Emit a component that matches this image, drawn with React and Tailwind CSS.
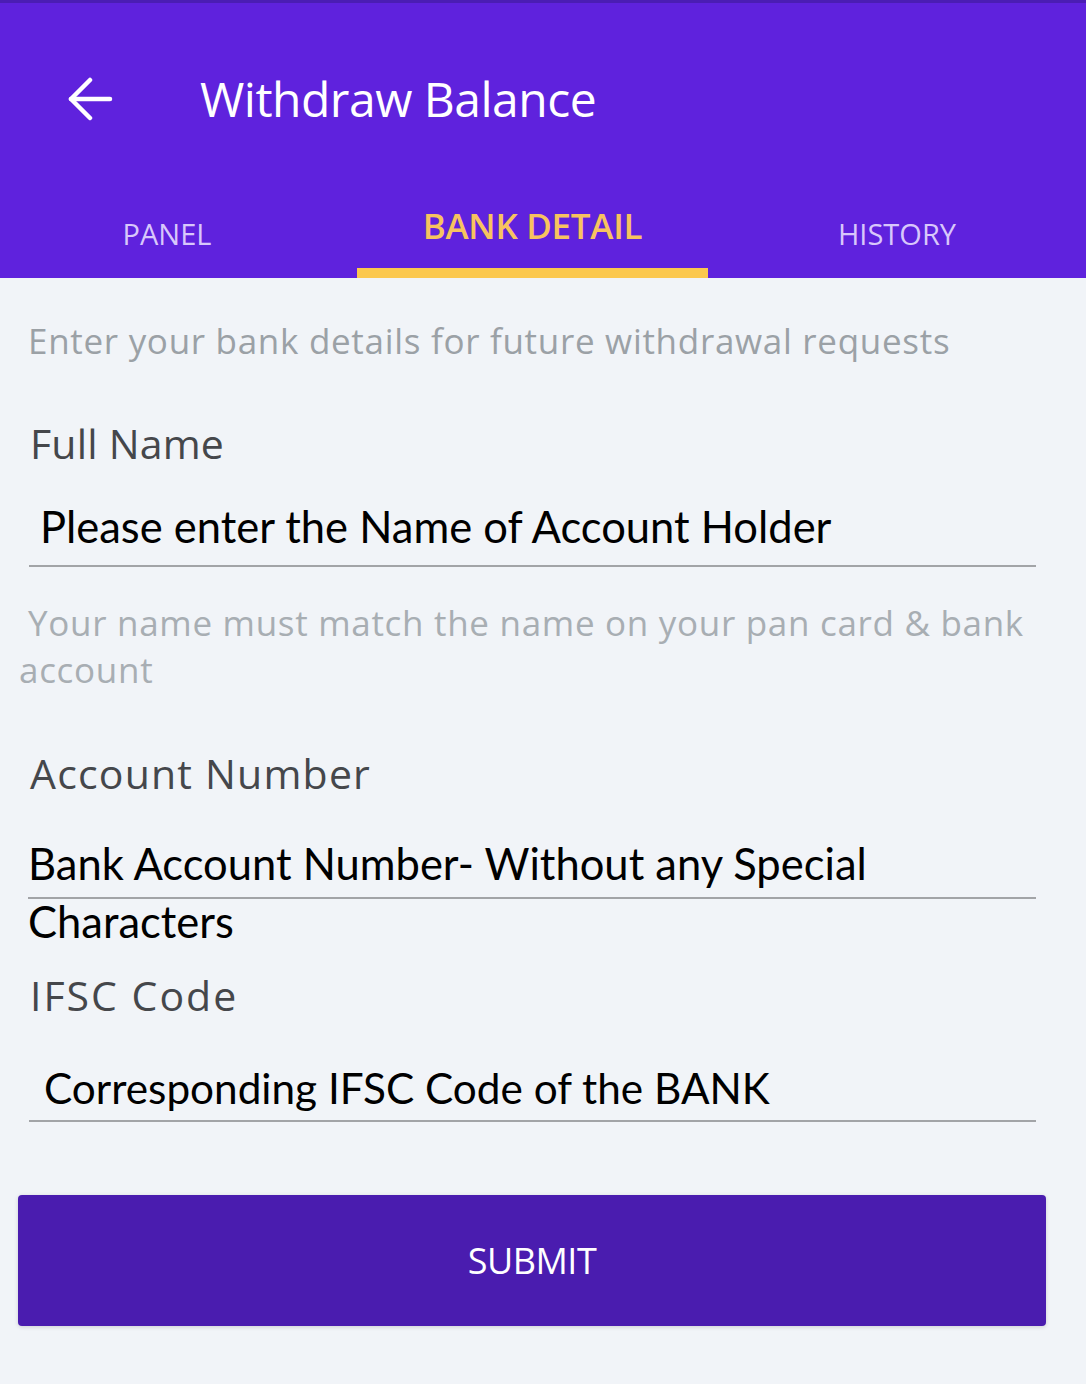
const UI_FONT = "font-['Open_Sans',sans-serif]";
const FIELD_FONT = "font-['Lato',sans-serif]";

const TABS = [
  { label: "PANEL", width: "w-[357px]", extra: "pr-[23px]" },
  { label: "BANK DETAIL", width: "w-[351px]", active: true },
  { label: "HISTORY", width: "w-[378px]", extra: "" },
];

const BackArrow = () => (
  <svg width="46" height="44" viewBox="0 0 46 44" fill="none" stroke="currentColor" strokeWidth="4.5" strokeLinecap="round" strokeLinejoin="round">
    <path d="M43 22H4" />
    <path d="M23 3L4 22l19 19" />
  </svg>
);

const Header = () => (
  <div className="border-t-[3px] border-[#4b1db4] bg-[#5f22dd]">
    <div className="flex h-[191px] items-center">
      <button type="button" className="ml-[67px] flex items-center justify-center text-white">
        <BackArrow />
      </button>
      <h1 className={`ml-[87px] text-[48px] leading-none tracking-[-0.5px] text-white ${UI_FONT}`}>
        Withdraw Balance
      </h1>
    </div>
    <div className="flex h-[84px]">
      {TABS.map((tab) =>
        tab.active ? (
          <div
            key={tab.label}
            className={`${tab.width} flex items-center justify-center border-b-[10px] border-[#fbc84e] pb-[10px] text-[35px] font-semibold tracking-[-0.3px] text-[#f7c35f] ${UI_FONT}`}
          >
            {tab.label}
          </div>
        ) : (
          <div
            key={tab.label}
            className={`${tab.width} ${tab.extra} flex items-center justify-center pt-[6px] pb-[10px] text-[29px] font-medium text-[#d8c7fb] ${UI_FONT}`}
          >
            {tab.label}
          </div>
        )
      )}
    </div>
  </div>
);

const Label = ({ children, className = "" }) => (
  <p className={`ml-[30px] text-[41px] font-medium leading-[48px] text-[#45474b] ${UI_FONT} ${className}`}>
    {children}
  </p>
);

const Field = ({ children, className = "", textClass = "" }) => (
  <div className={`mr-[50px] border-b-2 border-[#a2a4a7] ${className}`}>
    <p className={`leading-[58px] text-black ${FIELD_FONT} ${textClass}`}>{children}</p>
  </div>
);

export default function App() {
  return (
    <div className="min-h-[1384px] w-full bg-[#f1f4f8]">
      <Header />
      <div className="pt-[42px]">
        <p className={`ml-[28px] text-[35px] leading-[42px] tracking-[0.7px] text-[#9ba1a6] ${UI_FONT}`}>
          Enter your bank details for future withdrawal requests
        </p>

        <Label className="mt-[57px] tracking-[0.2px]">Full Name</Label>
        <Field className="ml-[29px] mt-[30px] h-[70px]" textClass="pl-[11px] text-[43.5px]">
          Please enter the Name of Account Holder
        </Field>

        <p className={`mt-[32px] pl-[19px] indent-[9px] text-[35px] leading-[47px] tracking-[0.7px] text-[#a8aeb3] ${UI_FONT}`}>
          Your name must match the name on your pan card &amp; bank
          <br />
          account
        </p>

        <Label className="mt-[56px] tracking-[1.2px]">Account Number</Label>
        <Field className="ml-[28px] mt-[37px] h-[65px]" textClass="text-[43.5px]">
          Bank Account Number- Without any Special Characters
        </Field>

        <Label className="mt-[72px] tracking-[2px]">IFSC Code</Label>
        <Field className="ml-[29px] mt-[40px] h-[63px]" textClass="pl-[15px] text-[42.3px]">
          Corresponding IFSC Code of the BANK
        </Field>

        <button
          type="button"
          className={`ml-[18px] mt-[73px] h-[131px] w-[1028px] rounded-[4px] bg-[#4a1caf] text-[36px] font-medium tracking-[-0.5px] text-white shadow-[0_1px_4px_rgba(0,0,0,0.15)] ${UI_FONT}`}
        >
          SUBMIT
        </button>
      </div>
    </div>
  );
}
